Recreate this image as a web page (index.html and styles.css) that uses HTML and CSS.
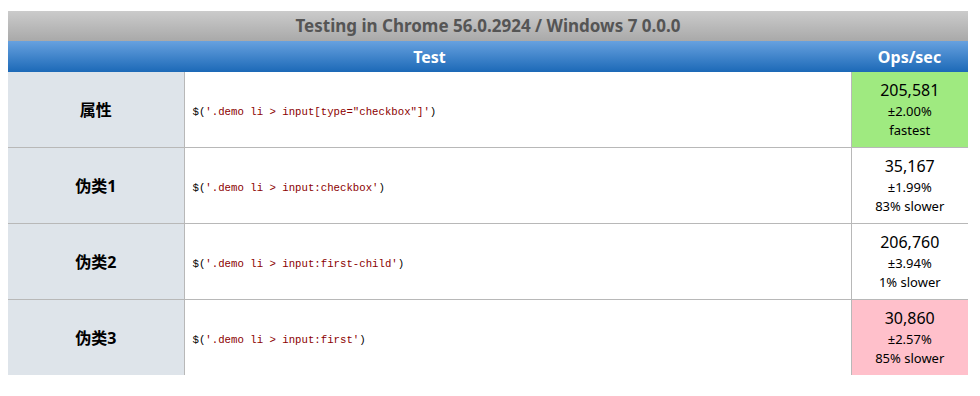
FILE: index.html
```html
<!DOCTYPE html>
<html lang="zh-CN">
<head>
  <meta charset="utf-8" />
  <title>Testing in Chrome 56.0.2924 / Windows 7 0.0.0</title>
  <link rel="stylesheet" href="styles.css">
</head>
<body>
  <table class="results">
    <caption>Testing in Chrome 56.0.2924 / Windows 7 0.0.0</caption>
    <colgroup>
      <col class="col-label">
      <col class="col-code">
      <col class="col-ops">
    </colgroup>
    <thead>
      <tr>
        <th colspan="2">Test</th>
        <th>Ops/sec</th>
      </tr>
    </thead>
    <tbody>
      <tr>
        <th class="label">属性</th>
        <td class="code"><code>$(<span class="str">'.demo li &gt; input[type="checkbox"]'</span>)</code></td>
        <td class="ops fastest">
          <span class="num">205,581</span>
          <small>±2.00%</small>
          <small>fastest</small>
        </td>
      </tr>
      <tr>
        <th class="label">伪类1</th>
        <td class="code"><code>$(<span class="str">'.demo li &gt; input:checkbox'</span>)</code></td>
        <td class="ops">
          <span class="num">35,167</span>
          <small>±1.99%</small>
          <small>83% slower</small>
        </td>
      </tr>
      <tr>
        <th class="label">伪类2</th>
        <td class="code"><code>$(<span class="str">'.demo li &gt; input:first-child'</span>)</code></td>
        <td class="ops">
          <span class="num">206,760</span>
          <small>±3.94%</small>
          <small>1% slower</small>
        </td>
      </tr>
      <tr>
        <th class="label">伪类3</th>
        <td class="code"><code>$(<span class="str">'.demo li &gt; input:first'</span>)</code></td>
        <td class="ops slowest">
          <span class="num">30,860</span>
          <small>±2.57%</small>
          <small>85% slower</small>
        </td>
      </tr>
    </tbody>
  </table>
</body>
</html>
```

FILE: styles.css
```css
body {
  margin: 11px 8px 8px;
  background: #fff;
  font-family: "Noto Sans", "Noto Sans CJK SC", sans-serif;
  color: #000;
}

.results {
  width: 960px;
  border-collapse: collapse;
  table-layout: fixed;
}

.col-label {
  width: 176px;
}

.col-ops {
  width: 117px;
}

.results caption {
  height: 30px;
  line-height: 30px;
  background: linear-gradient(#cbcbcb, #a9a9a9);
  color: #555;
  font-size: 17px;
  font-weight: bold;
}

.results thead th {
  height: 31px;
  padding: 0;
  background: linear-gradient(#67a1df, #1c69b7);
  color: #fff;
  font-size: 16px;
  font-weight: bold;
}

.results tbody tr {
  height: 76px;
  border-top: 1px solid #b8b8b8;
}

.results tbody tr:first-child {
  border-top: 0;
  height: 75px;
}

.label {
  background: #dee4ea;
  border-right: 1px solid #b8b8b8;
  font-size: 16px;
  font-weight: bold;
  padding: 0;
}

.code {
  padding: 0 8px;
  background: #fff;
}

.code code {
  font-family: "Liberation Mono", monospace;
  font-size: 10.7px;
  color: #000;
}

.code .str {
  color: #8b0000;
}

.ops {
  padding: 0;
  text-align: center;
  border-left: 1px solid #b8b8b8;
}

.ops .num {
  display: block;
  font-size: 16px;
  line-height: 24px;
}

.ops small {
  display: block;
  font-size: 13px;
  line-height: 19px;
}

.fastest {
  background: #9fea80;
}

.slowest {
  background: #ffc0cb;
}
```
